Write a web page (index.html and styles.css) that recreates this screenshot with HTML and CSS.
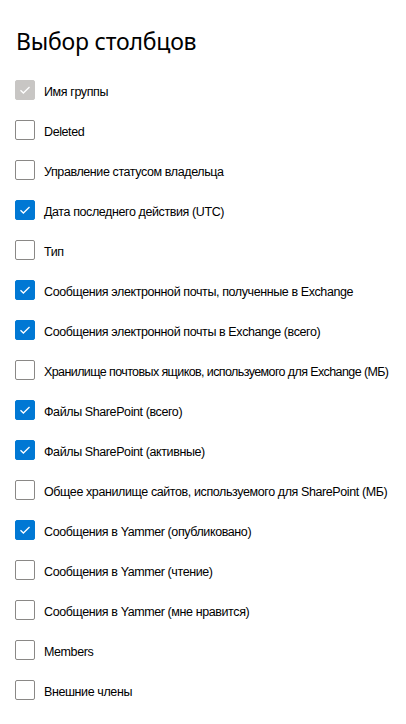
FILE: index.html
```html
<!DOCTYPE html>
<html lang="ru">
<head>
<meta charset="utf-8">
<link rel="stylesheet" href="styles.css">
</head>
<body>
<div class="panel">
  <h1 class="title">Выбор столбцов</h1>
  <ul class="list">
    <li class="row"><span class="box disabled"><svg viewBox="0 0 20 20"><path d="M5 10.2l3.2 3.2L15 6.6"/></svg></span><span class="label">Имя группы</span></li>
    <li class="row"><span class="box"></span><span class="label">Deleted</span></li>
    <li class="row"><span class="box"></span><span class="label">Управление статусом владельца</span></li>
    <li class="row"><span class="box checked"><svg viewBox="0 0 20 20"><path d="M5 10.2l3.2 3.2L15 6.6"/></svg></span><span class="label">Дата последнего действия (UTC)</span></li>
    <li class="row"><span class="box"></span><span class="label">Тип</span></li>
    <li class="row"><span class="box checked"><svg viewBox="0 0 20 20"><path d="M5 10.2l3.2 3.2L15 6.6"/></svg></span><span class="label">Сообщения электронной почты, полученные в Exchange</span></li>
    <li class="row"><span class="box checked"><svg viewBox="0 0 20 20"><path d="M5 10.2l3.2 3.2L15 6.6"/></svg></span><span class="label">Сообщения электронной почты в Exchange (всего)</span></li>
    <li class="row"><span class="box"></span><span class="label narrow">Хранилище почтовых ящиков, используемого для Exchange (МБ)</span></li>
    <li class="row"><span class="box checked"><svg viewBox="0 0 20 20"><path d="M5 10.2l3.2 3.2L15 6.6"/></svg></span><span class="label">Файлы SharePoint (всего)</span></li>
    <li class="row"><span class="box checked"><svg viewBox="0 0 20 20"><path d="M5 10.2l3.2 3.2L15 6.6"/></svg></span><span class="label">Файлы SharePoint (активные)</span></li>
    <li class="row"><span class="box"></span><span class="label">Общее хранилище сайтов, используемого для SharePoint (МБ)</span></li>
    <li class="row"><span class="box checked"><svg viewBox="0 0 20 20"><path d="M5 10.2l3.2 3.2L15 6.6"/></svg></span><span class="label">Сообщения в Yammer (опубликовано)</span></li>
    <li class="row"><span class="box"></span><span class="label">Сообщения в Yammer (чтение)</span></li>
    <li class="row"><span class="box"></span><span class="label">Сообщения в Yammer (мне нравится)</span></li>
    <li class="row"><span class="box"></span><span class="label">Members</span></li>
    <li class="row"><span class="box"></span><span class="label">Внешние члены</span></li>
  </ul>
</div>
</body>
</html>
```
FILE: styles.css
```css
html, body {
  margin: 0;
  padding: 0;
  background: #ffffff;
}
body {
  font-family: "Liberation Sans", Arial, sans-serif;
  color: #000000;
}
.panel {
  padding: 26px 0 0 15px;
}
.title {
  margin: 0 0 0 1px;
  font-family: "Noto Sans", sans-serif;
  font-weight: 400;
  font-size: 23px;
  line-height: 30px;
  letter-spacing: -0.2px;
  color: #000;
}
.list {
  list-style: none;
  margin: 24px 0 0 0;
  padding: 0;
}
.row {
  display: flex;
  align-items: center;
  height: 20px;
  margin-bottom: 20px;
}
.box {
  box-sizing: border-box;
  width: 20px;
  height: 20px;
  border: 1px solid #8a8886;
  border-radius: 2px;
  flex: none;
  display: flex;
  align-items: center;
  justify-content: center;
}
.box svg {
  width: 20px;
  height: 20px;
  fill: none;
  stroke: #fff;
  stroke-width: 1.4;
}
.box.checked {
  background: #0078d4;
  border-color: #0078d4;
}
.box.disabled {
  background: #c8c6c4;
  border-color: #c8c6c4;
}
.label {
  margin-left: 9px;
  font-size: 12.5px;
  line-height: 16px;
  padding-top: 3px;
  letter-spacing: -0.4px;
  color: #000;
  white-space: nowrap;
}
.label.narrow {
  letter-spacing: -0.6px;
}
```
